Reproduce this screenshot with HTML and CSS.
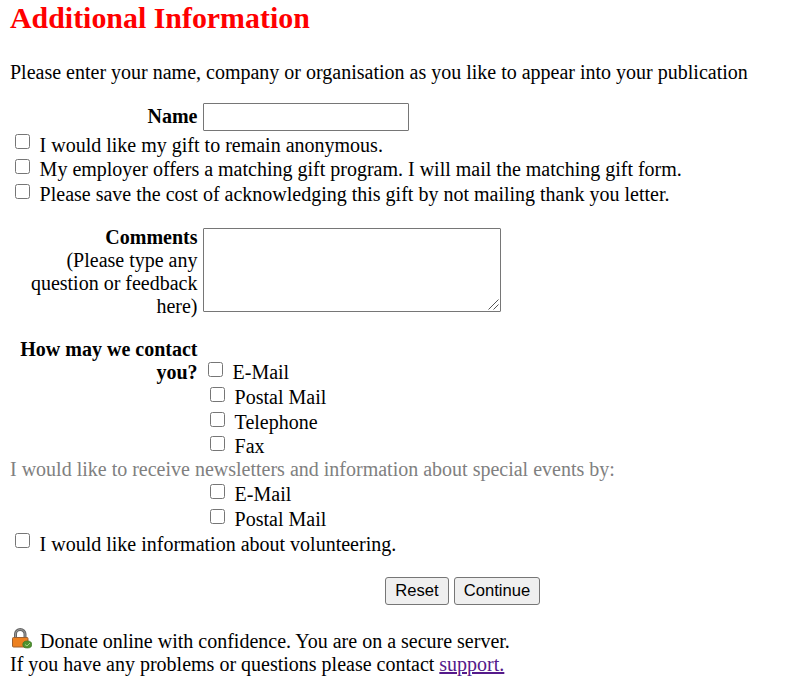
FILE: index.html
```html
<!DOCTYPE html>
<html lang="en">
<head>
<meta charset="utf-8">
<title>Additional Information</title>
<link rel="stylesheet" href="styles.css">
</head>
<body>
<form>
  <h1>Additional Information</h1>
  <p class="intro">Please enter your name, company or organisation as you like to appear into your publication</p>
  <div class="row name"><label class="label" for="name"><b>Name</b></label><input id="name" class="text" type="text"></div>
  <div class="group main">
    <label class="check"><input type="checkbox"><span>I would like my gift to remain anonymous.</span></label>
    <label class="check"><input type="checkbox"><span>My employer offers a matching gift program. I will mail the matching gift form.</span></label>
    <label class="check"><input type="checkbox"><span>Please save the cost of acknowledging this gift by not mailing thank you letter.</span></label>
  </div>
  <div class="row comments">
    <label class="label" for="comments"><b>Comments</b><br>(Please type any question or feedback here)</label>
    <div class="area"><textarea id="comments"></textarea><svg class="grip" viewBox="0 0 11 11"><path d="M.5 10.5l10-10M5.500 10.500l5-5" fill="none" stroke="#555"/></svg></div>
  </div>
  <div class="row contact"><b class="label">How may we contact you?</b><label class="check first"><input type="checkbox"><span>E-Mail</span></label></div>
  <div class="group inset">
    <label class="check"><input type="checkbox"><span>Postal Mail</span></label>
    <label class="check"><input type="checkbox"><span>Telephone</span></label>
    <label class="check"><input type="checkbox"><span>Fax</span></label>
  </div>
  <p class="news">I would like to receive newsletters and information about special events by:</p>
  <div class="group inset">
    <label class="check"><input type="checkbox"><span>E-Mail</span></label>
    <label class="check"><input type="checkbox"><span>Postal Mail</span></label>
  </div>
  <label class="check"><input type="checkbox"><span>I would like information about volunteering.</span></label>
  <div class="buttons"><button type="reset">Reset</button><button type="button">Continue</button></div>
  <div class="secure">
    <svg class="lock" viewBox="0 0 22 22"><path d="M5.500 10V6a4.750 4.500 0 0 1 9.500 0V10" fill="none" stroke="#666" stroke-width="3"/><path d="M5.500 9V6a4.750 4.500 0 0 1 9.500 0V9" fill="none" stroke="#999" stroke-width="1"/><rect x="2.500" y="9.500" width="15.500" height="9.500" rx="1" fill="#ed801f" stroke="#9c6030"/><ellipse cx="17.300" cy="16.500" rx="4.500" ry="3.500" fill="#4f922f" stroke="#397322" stroke-width=".7"/><path d="M15 16.500l2 1.500 3-3" fill="none" stroke="#a6d486"/></svg>
    <span>Donate online with confidence. You are on a secure server.</span>
  </div>
  <p class="support">If you have any problems or questions please contact <a href="#">support.</a></p>
</form>
</body>
</html>
```
FILE: styles.css
```css
body { margin: 0; background: #fff; color: #000; font: 20px/23px "Liberation Serif", serif; overflow: hidden; }
form { padding: 1px 10px 0; }
h1 { margin: 0; color: #f00; font-size: 29.9px; line-height: 33px; }
p { margin: 0; white-space: nowrap; }
.intro { margin-top: 27px; }
.row { display: flex; }
.label { width: 187.5px; margin-right: 5.5px; text-align: right; }
.name { margin-top: 19px; height: 30.6px; }
.name .label { padding-top: 2px; }
.text { box-sizing: border-box; width: 206px; height: 28px; border: 1px solid #767676; border-radius: 1px; padding: 2px; }
.check { display: flex; height: 24.6px; white-space: nowrap; }
.check input { box-sizing: border-box; flex: none; width: 15px; height: 15px; margin: .8px 9.6px 0 5px; }
.comments { margin-top: 18.6px; }
.comments .label { padding: 0 0 0 10px; box-sizing: border-box; }
.area { position: relative; height: 86px; }
textarea { display: block; box-sizing: border-box; width: 298px; height: 84px; margin-top: 2px; border: 1px solid #767676; border-radius: 1px; resize: none; }
.grip { position: absolute; right: 2px; bottom: 2px; width: 11px; height: 11px; }
.contact { margin-top: 20px; height: 48.2px; }
.first { margin-top: 23px; }
.check.first input { margin-right: 9.5px; }
.inset { padding-left: 195px; }
.news { margin-top: -1.5px; color: #808080; }
.news + .inset { margin-top: 2px; }
.buttons { display: flex; gap: 5px; margin: 19.6px 0 0 375px; }
button { box-sizing: border-box; height: 28px; padding: 1px 8px; border: 1px solid #767676; border-radius: 3px; background: #efefef; font: 16.6px "Liberation Sans", sans-serif; }
button:first-child { width: 64px; }
button:last-child { width: 86px; }
.secure { display: flex; margin-top: 25.1px; }
.lock { width: 22px; height: 22px; margin: -2px 8px 0 0; }
a { color: #551a8b; }
```
